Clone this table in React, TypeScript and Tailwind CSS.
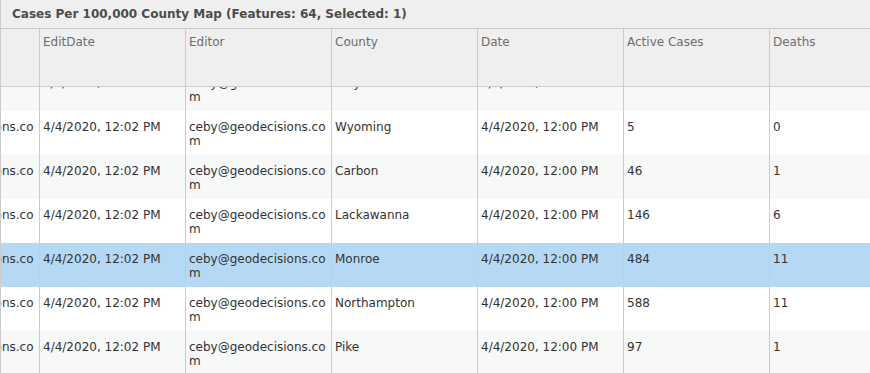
import React from 'react'

interface Row {
  creator: string;
  editDate: string;
  editor: string;
  county: string;
  date: string;
  active: string;
  deaths: string;
  selected?: boolean;
}

const columns = ['Creator', 'EditDate', 'Editor', 'County', 'Date', 'Active Cases', 'Deaths', 'Recovered']

const rows: Row[] = [
  { creator: 'ceby@geodecisions.com', editDate: '4/4/2020, 12:02 PM', editor: 'ceby@geodecisions.com', county: 'Wayne', date: '4/4/2020, 12:00 PM', active: '12', deaths: '0' },
  { creator: 'ceby@geodecisions.com', editDate: '4/4/2020, 12:02 PM', editor: 'ceby@geodecisions.com', county: 'Wyoming', date: '4/4/2020, 12:00 PM', active: '5', deaths: '0' },
  { creator: 'ceby@geodecisions.com', editDate: '4/4/2020, 12:02 PM', editor: 'ceby@geodecisions.com', county: 'Carbon', date: '4/4/2020, 12:00 PM', active: '46', deaths: '1' },
  { creator: 'ceby@geodecisions.com', editDate: '4/4/2020, 12:02 PM', editor: 'ceby@geodecisions.com', county: 'Lackawanna', date: '4/4/2020, 12:00 PM', active: '146', deaths: '6' },
  { creator: 'ceby@geodecisions.com', editDate: '4/4/2020, 12:02 PM', editor: 'ceby@geodecisions.com', county: 'Monroe', date: '4/4/2020, 12:00 PM', active: '484', deaths: '11', selected: true },
  { creator: 'ceby@geodecisions.com', editDate: '4/4/2020, 12:02 PM', editor: 'ceby@geodecisions.com', county: 'Northampton', date: '4/4/2020, 12:00 PM', active: '588', deaths: '11' },
  { creator: 'ceby@geodecisions.com', editDate: '4/4/2020, 12:02 PM', editor: 'ceby@geodecisions.com', county: 'Pike', date: '4/4/2020, 12:00 PM', active: '97', deaths: '1' },
]

const Cell: React.FC<{ children?: React.ReactNode }> = ({ children }) => (
  <div className="w-[146px] shrink-0 border-r border-[#cccccc] px-[3px] pt-[9px] leading-[14px] break-all">
    {children}
  </div>
)

export default function App() {
  return (
    <div className="w-[870px] h-[373px] overflow-hidden bg-white border-l border-[#cccccc] font-['DejaVu_Sans',sans-serif] text-[12px]">
      {/* title bar */}
      <div className="h-[29px] bg-[#efefef] border-b border-[#cccccc] pl-[11px] pt-[7px] leading-[14px] font-bold text-[#4c4c4c] whitespace-nowrap">
        Cases Per 100,000 County Map (Features: 64, Selected: 1)
      </div>

      {/* header, scrolled horizontally */}
      <div className="h-[58px] bg-[#efefef] border-b border-[#cccccc] overflow-hidden">
        <div className="flex h-full -ml-[107px]">
          {columns.map((c) => (
            <div key={c} className="w-[146px] shrink-0 h-full border-r border-[#cccccc] px-[3px] pt-[6px] leading-[14px] text-[#6e6e6e]">
              {c}
            </div>
          ))}
        </div>
      </div>

      {/* body, scrolled vertically and horizontally */}
      <div className="h-[286px] overflow-hidden">
        <div className="-mt-[20px] -ml-[107px]">
          {rows.map((r, i) => (
            <div
              key={i}
              className={
                'flex h-[44px] text-[#333333] ' +
                (r.selected ? 'bg-[#b5d9f5]' : i % 2 === 0 ? 'bg-[#f7f8f8]' : 'bg-white')
              }
            >
              <Cell>{r.creator}</Cell>
              <Cell>{r.editDate}</Cell>
              <Cell>{r.editor}</Cell>
              <Cell>{r.county}</Cell>
              <Cell>{r.date}</Cell>
              <Cell>{r.active}</Cell>
              <Cell>{r.deaths}</Cell>
              <Cell></Cell>
            </div>
          ))}
        </div>
      </div>
    </div>
  )
}
